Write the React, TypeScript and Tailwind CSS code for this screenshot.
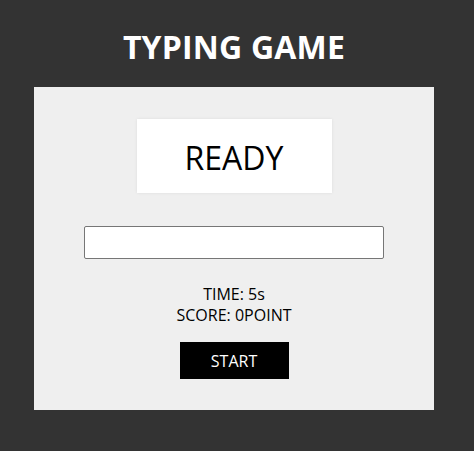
export default function App() {
  return (
    <div className="min-h-[451px] w-full bg-[#333333] font-['Open_Sans','Noto_Sans',sans-serif]">
      <div className="flex w-[468px] flex-col items-center">
        {/* 제목 */}
        <h1 className="flex h-[87px] items-center pt-[6px] text-[32px] font-bold leading-none tracking-[0.2px] text-white">
          TYPING GAME
        </h1>

        {/* 게임 패널 */}
        <div className="flex h-[323px] w-[400px] flex-col items-center bg-[#efefef] pt-[32px]">
          <div className="flex h-[74px] w-[195px] items-center justify-center bg-white pt-[4px] text-[32px] text-black shadow-[0_0_3px_rgba(0,0,0,0.08)]">
            READY
          </div>

          <input
            type="text"
            className="mt-[33px] h-[33px] w-[300px] rounded-[2px] border border-[#767676] bg-white px-2 outline-none"
          />

          <div className="mt-[25px] flex flex-col items-center text-[16px] leading-[21px] text-black">
            <span>TIME: 5s</span>
            <span>SCORE: 0POINT</span>
          </div>

          <button className="mt-[16px] flex h-[37px] w-[109px] items-center justify-center bg-black text-[16px] text-white">
            START
          </button>
        </div>
      </div>
    </div>
  );
}
